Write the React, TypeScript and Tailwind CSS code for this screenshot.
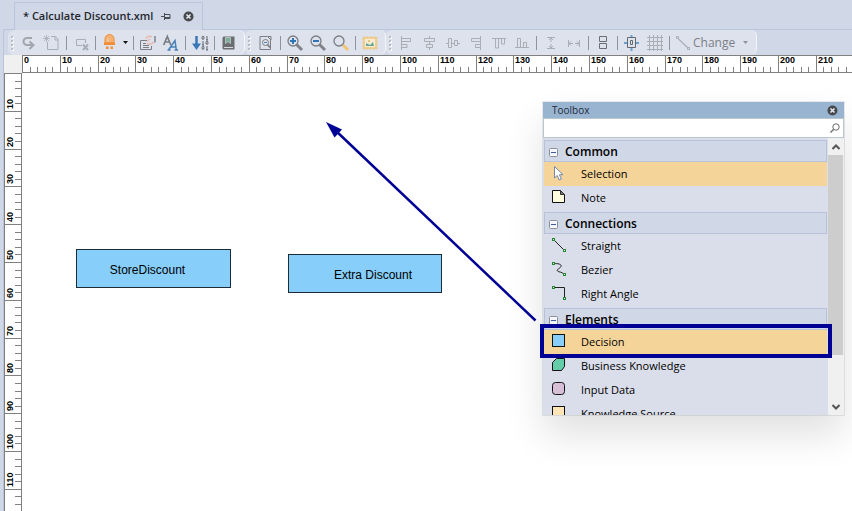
import { useEffect, useState } from 'react';
import type { ReactNode } from 'react';

const UNIT = 3.78; // px per millimetre

const GRAY = '#a9adb5';
const DARK = '#7b7d82';
const BLUE = '#4a80b8';

/* ---------- rulers ---------- */

// one tick every 2 mm, as many as fit in the given length
const ticksFor = (length: number) =>
  Array.from({ length: Math.ceil(length / (2 * UNIT)) }, (_, i) => i);

const useWindowSize = () => {
  const [size, setSize] = useState({
    width: window.innerWidth,
    height: window.innerHeight,
  });

  useEffect(() => {
    const onResize = () =>
      setSize({ width: window.innerWidth, height: window.innerHeight });
    window.addEventListener('resize', onResize);
    return () => window.removeEventListener('resize', onResize);
  }, []);

  return size;
};

const HorizontalRuler = () => {
  const { width } = useWindowSize();
  const ticks = ticksFor(width - 22);

  return (
    <svg className="block h-[18px] w-full bg-white" aria-label="Horizontal ruler">
      <g fill="#808080" shapeRendering="crispEdges">
        <rect x="0" y="0" width="100%" height="1" />
        <rect x="0" y="17" width="100%" height="1" />
        {ticks.map((i) => (
          <rect
            key={i}
            x={Math.round(i * 2 * UNIT)}
            y={i % 5 === 0 ? 0 : 12}
            width="1"
            height={i % 5 === 0 ? 18 : 6}
          />
        ))}
      </g>
      <g className="fill-black font-['Liberation_Sans',sans-serif] text-[9px] font-bold">
        {ticks
          .filter((i) => i % 5 === 0)
          .map((i) => (
            <text key={i} x={Math.round(i * 2 * UNIT) + 2} y="8">
              {i * 2}
            </text>
          ))}
      </g>
    </svg>
  );
};

const VerticalRuler = () => {
  const { height } = useWindowSize();
  const ticks = ticksFor(height - 73);

  return (
    <svg
      className="block h-full w-[18px] shrink-0 bg-white"
      aria-label="Vertical ruler"
    >
      <g fill="#808080" shapeRendering="crispEdges">
        <rect x="0" y="0" width="1" height="100%" />
        <rect x="17" y="0" width="1" height="100%" />
        {ticks.map((i) => (
          <rect
            key={i}
            x={i % 5 === 0 ? 0 : 11}
            y={Math.round(i * 2 * UNIT)}
            width={i % 5 === 0 ? 18 : 7}
            height="1"
          />
        ))}
      </g>
      <g className="fill-black font-['Liberation_Sans',sans-serif] text-[9px] font-bold">
        {ticks
          .filter((i) => i > 0 && i % 5 === 0)
          .map((i) => (
            <text
              key={i}
              transform={`translate(9 ${Math.round(i * 2 * UNIT) - 2}) rotate(-90)`}
            >
              {i * 2}
            </text>
          ))}
      </g>
    </svg>
  );
};

/* ---------- toolbar ---------- */

const Tool = ({ label, children }: { label: string; children: ReactNode }) => (
  <button
    type="button"
    aria-label={label}
    className="flex h-6 w-[23px] items-center justify-center"
  >
    <svg width="19" height="18" viewBox="0 0 19 18" fill="none">
      {children}
    </svg>
  </button>
);

const Separator = () => (
  <span className="flex w-[6px] justify-center">
    <span className="h-[14px] w-px bg-[#8d939f]" />
  </span>
);

const Group = ({ children }: { children: ReactNode }) => (
  <div className="flex h-[25px] items-center rounded-md border-r border-[#f3f5f9] bg-[#dde2ed] pr-1">
    <svg width="9" height="16" viewBox="0 0 9 16" className="shrink-0">
      {[1, 5, 9, 13].map((y) => (
        <g key={y}>
          <rect x="4" y={y + 1} width="2" height="2" fill="#fff" />
          <rect x="3" y={y} width="2" height="2" fill="#b9bdc9" />
        </g>
      ))}
    </svg>
    {children}
  </div>
);

const Lens = ({ handle }: { handle: string }) => (
  <>
    <path d="M11.5 10.5 17 16" stroke={handle} strokeWidth="3" />
    <circle cx="8" cy="7" r="5" stroke={DARK} strokeWidth="1.3" />
  </>
);

const Toolbar = () => (
  <div className="flex h-[26px] items-center border-t border-[#b9c5da] pl-1">
    <Group>
      <Tool label="Redo">
        <path
          d="M13 4H8a3.500 3.500 0 0 0 0 7H13"
          stroke="#a3a6ad"
          strokeWidth="2"
        />
        <path d="M10.500 7.500 14.500 11l-4 4" stroke="#a3a6ad" strokeWidth="2" />
      </Tool>
      <Tool label="New">
        <path
          d="M9 2.500h4.500l2.500 2.500V15.500H5.500V8M13 2.500V6h3"
          stroke={GRAY}
        />
        <path d="M4.500 1v7M1 4.500h7M2 2l5 5M7 2 2 7" stroke={GRAY} strokeWidth="0.8" />
      </Tool>
      <Separator />
      <Tool label="Remove">
        <path d="M11 11.500H5.500v-6h9V9" stroke={GRAY} />
        <path d="M12 10.500 17 16M17 10.500 12 16" stroke={GRAY} strokeWidth="2" />
      </Tool>
      <Separator />
      <Tool label="Highlight">
        <path d="M5 9V5a4.500 4.500 0 0 1 9 0V9Z" fill="#f5b074" stroke="#f08d35" />
        <path d="M8 4v4" stroke="#fbd3a9" strokeWidth="1.2" />
        <path d="M4 8.500h11V11H4zM6 12.500h2.500V15H6zM10.500 12.500H13V15h-2.500z" fill="#f08d35" />
      </Tool>
      <button
        type="button"
        aria-label="Highlight options"
        className="flex h-6 w-[9px] items-center justify-center"
      >
        <svg width="5" height="3" viewBox="0 0 5 3">
          <path d="M0 0h5L2.500 3Z" fill="#111" />
        </svg>
      </button>
      <Separator />
      <Tool label="Edit properties">
        <path d="M9 6.500H2.500v9h11V12M5 9.500h3M5 11.500h6M5 13.500h6" stroke={DARK} />
        <path
          d="M7.500 4.500 10 2.500h4M9 7.500l3-2.500M9 10h4.500l2-2"
          stroke="#eab7ad"
          strokeWidth="1.400"
        />
        <path d="M17 2v6.500" stroke={DARK} strokeWidth="1.4" />
      </Tool>
      <Tool label="Font">
        <path
          d="M2.700 11 6.300 2.500 9.800 11M4 8h4.500"
          stroke={DARK}
          strokeWidth="1.700"
        />
        <path
          d="M7.500 16 14 6.500 15.300 16M10 13h5M6.500 16h3M13.500 16H17"
          stroke={BLUE}
          strokeWidth="1.500"
        />
      </Tool>
      <Separator />
      <Tool label="Sort numeric">
        <path d="M6.500 2v9" stroke="#3978b5" strokeWidth="2.500" />
        <path d="M2 9.500h9L6.500 16Z" fill="#3978b5" />
        {[2, 7, 12].map((y, row) => (
          <g key={y} stroke="#55585e" strokeWidth="0.9">
            <ellipse cx={row === 1 ? 17 : 13} cy={y + 1.8} rx="1" ry="1.7" />
            <path d={row === 1 ? `M13 ${y}v4M12 ${y + 4}h2` : `M17 ${y}v4M16 ${y + 4}h2`} />
          </g>
        ))}
      </Tool>
      <Separator />
      <Tool label="Book">
        <path d="M5 2.500h10.500v13H5a1.500 1.500 0 0 1-1.500-1.500V4A1.500 1.500 0 0 1 5 2.500Z" fill="#6c6d70" />
        <path d="M5 13.500h9" stroke="#d7dae0" strokeWidth="1" />
        <path d="M6.500 3.500h5v6L9 7.500 6.500 9.500Z" fill="#7faa99" stroke="#b8d3c8" strokeWidth="0.8" />
      </Tool>
    </Group>

    <Group>
      <Tool label="Fit page">
        <path d="M11 2.500H4v13h10.500V6M11.500 2.500 15 6V2.500Z" stroke={DARK} />
        <circle cx="9.500" cy="8.500" r="3" stroke={DARK} />
        <path d="M8 8.500h3" stroke={BLUE} />
        <path d="M11.500 10.500 14 13.500" stroke={DARK} strokeWidth="1.700" />
      </Tool>
      <Separator />
      <Tool label="Zoom in">
        <Lens handle="#808288" />
        <path d="M8 4v6M5 7h6" stroke="#2f74b5" strokeWidth="2" />
      </Tool>
      <Tool label="Zoom out">
        <Lens handle="#808288" />
        <path d="M5 7h6" stroke="#2f74b5" strokeWidth="2" />
      </Tool>
      <Tool label="Zoom">
        <Lens handle="#efc475" />
      </Tool>
      <Separator />
      <Tool label="Image">
        <rect x="4" y="4" width="12" height="10" fill="#f6ecd6" stroke="#efc67c" strokeWidth="1.500" />
        <rect x="3" y="3" width="14" height="12" stroke="#efc67c" strokeDasharray="2 1.500" />
        <path d="M6 12V9l2 1 2 1 3-3 1 4Z" fill="#6aa795" />
        <circle cx="9" cy="7" r="1" fill="#e9b65f" />
      </Tool>
    </Group>

    <Group>
      <Tool label="Align left">
        <path d="M4.500 2v14M5 4.500h8.500v3H5M5 10.500h5v3H5" stroke={GRAY} />
      </Tool>
      <Tool label="Align centre">
        <path d="M9.500 2v2M9.500 8v2M9.500 14v2M4.500 4.500h10v3h-10zM6.500 10.500h6v3h-6z" stroke={GRAY} />
      </Tool>
      <Tool label="Align middle">
        <path d="M3 9.500h2M9 9.500h3M15 9.500h2M5.500 4.500h3v9h-3zM11.500 6.500h3v5h-3z" stroke={GRAY} />
      </Tool>
      <Tool label="Align right">
        <path d="M14.500 2v14M14 4.500H5.500v3H14M14 10.500H9.500v3H14" stroke={GRAY} />
      </Tool>
      <Tool label="Align top">
        <path d="M3 4.500h14M6.500 5v9h3V5M12.500 5v5h3V5" stroke={GRAY} />
      </Tool>
      <Tool label="Align bottom">
        <path d="M3 13.500h14M5.500 13V4.500h3V13M11.500 13V8.500h3V13" stroke={GRAY} />
      </Tool>
      <Separator />
      <Tool label="Same height">
        <path d="M6 3.500h8M6 14.500h8M10 4v4M10 10v4M8 6l2-2 2 2M8 12l2 2 2-2" stroke={GRAY} />
      </Tool>
      <Tool label="Same width">
        <path d="M4.500 6v7M15.500 6v7M5 9.500h4M11 9.500h4M7 7.500l-2 2 2 2M13 7.500l2 2-2 2" stroke={GRAY} />
      </Tool>
      <Separator />
      <Tool label="Stack">
        <path d="M6.500 2.500h7v5h-7zM6.500 9.500h7v5h-7z" stroke="#6d6f74" />
      </Tool>
      <Separator />
      <Tool label="Autosize">
        <path d="M9.500 1v3M9.500 14v3M2 9h3M14 9h3" stroke="#6d9fcd" strokeWidth="2" />
        <path d="M5.500 3.500h8v10h-8zM8.500 6.500h2v4h-2z" stroke="#66686d" />
      </Tool>
      <Tool label="Grid">
        <path
          d="M4.500 1v16M8.500 1v16M12.500 1v16M16.500 1v16M2 3.500h16M2 7.500h16M2 11.500h16M2 15.500h16"
          stroke={GRAY}
        />
      </Tool>
      <Separator />
      <button
        type="button"
        className="flex h-6 items-center pl-[2px] font-['Open_Sans',sans-serif] text-[12px] text-[#7c7f86]"
      >
        <svg width="19" height="18" viewBox="0 0 19 18" fill="none" stroke={GRAY}>
          <path d="M4.500 5 13.500 13.500" strokeWidth="1.200" />
          <path d="M2.500 2.500h2v2h-2zM13.500 13.500h2v2h-2z" />
        </svg>
        Change
        <svg width="5" height="3" viewBox="0 0 5 3" className="mr-1 ml-2">
          <path d="M0 0h5L2.500 3Z" fill="#8f939b" />
        </svg>
      </button>
    </Group>
  </div>
);

/* ---------- toolbox ---------- */

const Square = ({ fill, rx = 0 }: { fill: string; rx?: number }) => (
  <rect x="1.500" y="0.500" width="12" height="12" rx={rx} fill={fill} stroke="#111" />
);

const Handles = ({ points }: { points: [number, number][] }) => (
  <>
    {points.map(([x, y]) => (
      <rect key={`${x}-${y}`} x={x} y={y} width="2" height="2" fill="#fff" stroke="#1f8a2c" />
    ))}
  </>
);

const SECTIONS: { title: string; items: { name: string; icon: ReactNode }[] }[] = [
  {
    title: 'Common',
    items: [
      {
        name: 'Selection',
        icon: (
          <path
            d="M3.500.5v11.500l2.700-2.500 2 4.500 2.200-1-2-4.300h3.600Z"
            fill="#fff"
            stroke="#7288ab"
          />
        ),
      },
      {
        name: 'Note',
        icon: (
          <>
            <path d="M1.500.500h8l4 4v8h-12Z" fill="#ffffdf" stroke="#111" />
            <path d="M9.500.500v4h4Z" fill="#777" stroke="#333" />
          </>
        ),
      },
    ],
  },
  {
    title: 'Connections',
    items: [
      {
        name: 'Straight',
        icon: (
          <>
            <path d="M3 2 12 11" stroke="#222" />
            <Handles points={[[1.5, 0.5], [12.5, 11.5]]} />
          </>
        ),
      },
      {
        name: 'Bezier',
        icon: (
          <>
            <path d="M3 1.500c5 0 8 1 7 3S5 7.500 6.500 9 11 9.500 12.500 12" stroke="#222" />
            <Handles points={[[1.5, 0.5], [12.5, 11.5]]} />
          </>
        ),
      },
      {
        name: 'Right Angle',
        icon: (
          <>
            <path d="M3 1.500h10.500V11" stroke="#222" />
            <Handles points={[[1.5, 0.5], [12.5, 11.5]]} />
          </>
        ),
      },
    ],
  },
  {
    title: 'Elements',
    items: [
      { name: 'Decision', icon: <Square fill="#87cefa" /> },
      {
        name: 'Business Knowledge',
        icon: (
          <path d="M5.500.500h8v8l-3 4h-9V4.500Z" fill="#66cdaa" stroke="#111" />
        ),
      },
      { name: 'Input Data', icon: <Square fill="#d8bfd8" rx={3} /> },
      { name: 'Knowledge Source', icon: <Square fill="#ffe4b5" /> },
    ],
  },
];

const CloseIcon = () => (
  <svg width="11" height="11" viewBox="0 0 11 11">
    <circle cx="5.500" cy="5.500" r="5" fill="#47494d" />
    <path d="m3.500 3.500 4 4m0-4-4 4" stroke="#e3e8f0" strokeWidth="1.600" />
  </svg>
);

const Toolbox = () => {
  const [query, setQuery] = useState('');
  const [selected, setSelected] = useState('Selection');

  return (
    <section
      aria-label="Toolbox"
      className="absolute top-[29px] right-2 w-[301px] bg-[#dadeea] font-['Open_Sans',sans-serif] shadow-[0_20px_36px_rgba(0,0,0,0.12),0_0_0_1px_#e9eaec]"
    >
      <header className="flex h-4 items-center justify-between bg-[#99b4d1] pr-[6px] pl-[9px] text-[10px] text-[#1e2a3a]">
        <span>Toolbox</span>
        <button type="button" aria-label="Close toolbox">
          <CloseIcon />
        </button>
      </header>

      <div className="flex h-5 items-center border border-[#b9c8cf] bg-white pr-[3px]">
        <input
          type="text"
          aria-label="Search tools"
          value={query}
          onChange={(e) => setQuery(e.target.value)}
          className="min-w-0 flex-1 px-2 text-[11px] outline-none"
        />
        <svg width="10" height="10" viewBox="0 0 10 10" fill="none" stroke="#6b6b6b">
          <circle cx="6" cy="4" r="3.200" />
          <path d="M3.700 6.300.5 9.500" strokeWidth="1.300" />
        </svg>
      </div>

      <div className="flex h-[277px] pl-px">
        <div className="min-w-0 flex-1 overflow-hidden">
          {SECTIONS.map((section) => (
            <div key={section.title}>
              <h2 className="mt-[2px] flex h-[22px] items-center border border-[#b8c2d9] bg-[#d0d7e6] pt-[2px] pl-1 text-[12px] font-semibold text-black">
                <svg width="9" height="9" viewBox="0 0 9 9" className="mr-[7px]">
                  <rect x="0.500" y="0.500" width="8" height="8" rx="1" fill="#f6f7fa" stroke="#8b8f98" />
                  <path d="M2 4.500h5" stroke="#3b5ba5" />
                </svg>
                {section.title}
              </h2>
              {section.items.map(({ name, icon }) => (
                <button
                  key={name}
                  type="button"
                  onClick={() => setSelected(name)}
                  className={`flex h-6 w-full items-center gap-[14px] pl-[7px] text-left text-[11px] text-black ${
                    name === selected || name === 'Decision' ? 'bg-[#f5d499]' : ''
                  }`}
                >
                  <svg width="16" height="16" viewBox="0 0 16 16" fill="none">
                    {icon}
                  </svg>
                  {name}
                </button>
              ))}
            </div>
          ))}
        </div>

        {/* scroll bar */}
        <div className="ml-px flex w-4 flex-col bg-[#f0f0f0]">
          <button type="button" aria-label="Scroll up" className="flex h-[17px] items-center justify-center">
            <svg width="8" height="6" viewBox="0 0 8 6" fill="none" stroke="#555" strokeWidth="2">
              <path d="M.5 5 4 1.500 7.500 5" />
            </svg>
          </button>
          <div className="mr-px h-[200px] bg-[#cdcdcd]" />
          <button type="button" aria-label="Scroll down" className="mt-auto flex h-[17px] items-center justify-center">
            <svg width="8" height="6" viewBox="0 0 8 6" fill="none" stroke="#555" strokeWidth="2">
              <path d="M.5 1 4 4.500 7.500 1" />
            </svg>
          </button>
        </div>
      </div>

      {/* callout frame around the Decision row */}
      <div className="pointer-events-none absolute top-[222px] right-3 -left-[3px] h-[34px] border-4 border-[#000094]" />
    </section>
  );
};

/* ---------- canvas ---------- */

const Canvas = () => (
  <main className="relative min-w-0 flex-1 overflow-hidden bg-white font-['Liberation_Sans',sans-serif] text-[12px] text-black">
    <div className="absolute top-[176px] left-[54px] flex h-[39px] w-[155px] items-center justify-center border border-[#1c2b36] bg-[#87cefa] pt-[2px] pr-3">
      StoreDiscount
    </div>
    <div className="absolute top-[181px] left-[266px] flex h-[39px] w-[154px] items-center justify-center border border-[#1c2b36] bg-[#87cefa] pt-[2px] pl-4">
      Extra Discount
    </div>
    <Toolbox />
    <svg
      className="pointer-events-none absolute top-[49px] left-[304px]"
      width="212"
      height="202"
      viewBox="0 0 212 202"
    >
      <path d="M9 8 209.500 198.500" stroke="#000094" strokeWidth="2.500" />
      <path d="M0 0 16 7.500 8.500 15.500Z" fill="#000094" />
    </svg>
  </main>
);

export default function App() {
  return (
    <div className="flex h-screen flex-col overflow-hidden bg-[#d0d7e6]">
      <div className="flex h-[29px] items-end pl-[14px]">
        <div className="relative -mb-px flex h-7 items-center border border-b-0 border-[#b9c5da] bg-[#d0d7e6] px-2 font-['Open_Sans',sans-serif] text-[11px] font-semibold text-[#24272e]">
          * Calculate Discount.xml
          <button type="button" aria-label="Pin tab" className="ml-2">
            <svg width="10" height="8" viewBox="0 0 10 8" fill="none" stroke="#4b4e55">
              <path d="M0 3.500h4M3.500 0v7M4 1.500h5v4H4M4 4.500h5" />
            </svg>
          </button>
          <button type="button" aria-label="Close tab" className="ml-3">
            <CloseIcon />
          </button>
        </div>
      </div>

      <div className="ml-[3px] flex min-h-0 flex-1 flex-col border-l border-[#b9c5da]">
        <Toolbar />
        <div className="flex bg-[#f0f0f0] pl-[18px]">
          <HorizontalRuler />
        </div>
        <div className="flex min-h-0 flex-1">
          <VerticalRuler />
          <Canvas />
        </div>
      </div>
    </div>
  );
}
